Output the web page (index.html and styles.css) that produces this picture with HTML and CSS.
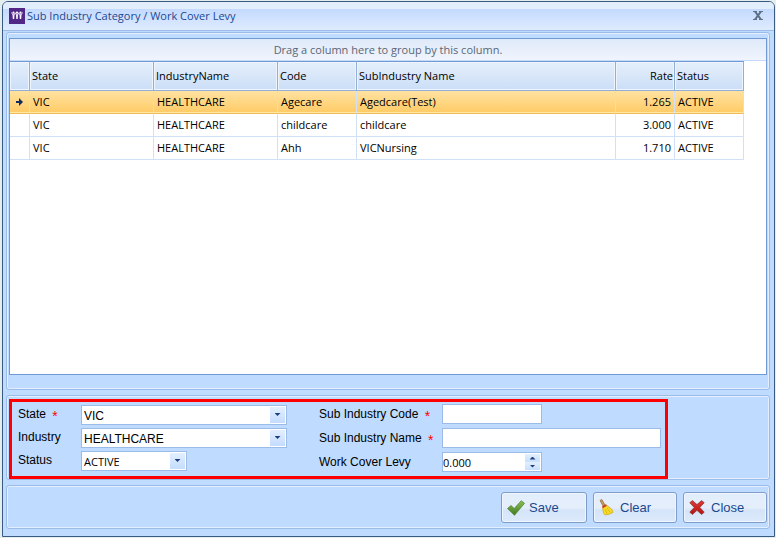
FILE: index.html
```html
<!DOCTYPE html>
<html lang="en">
<head>
    <meta charset="UTF-8">
    <meta name="viewport" content="width=device-width, initial-scale=1.0">
    <title>Sub Industry Category / Work Cover Levy</title>
    <link rel="stylesheet" href="styles.css">
</head>
<body>
    <div class="window">
        <!-- Title bar -->
        <header class="title-bar">
            <svg class="app-icon" width="16" height="16" viewBox="0 0 16 16" aria-hidden="true">
                <rect width="16" height="16" fill="#512888"/>
                <g fill="#fff">
                    <circle cx="4.500" cy="4.700" r="1.100"/>
                    <circle cx="8" cy="4.700" r="1.100"/>
                    <circle cx="11.500" cy="4.700" r="1.100"/>
                    <path d="M3.500 6.500h2L5.200 11H3.800zM7 6.500h2L8.700 11H7.300zM10.500 6.500h2L12.200 11h-1.400z"/>
                </g>
                <path d="M2.500 4.500 4 7h1L6.300 4.800 7.500 7h1L9.700 4.800 11 7h1l1.500-2.500" fill="none" stroke="#e6dcf3"/>
            </svg>
            <h1>Sub Industry Category / Work Cover Levy</h1>
            <button type="button" class="close-x" aria-label="Close window">
                <svg width="10" height="9" viewBox="0 0 10 9">
                    <path d="M2 .5 8 8.500M8 .5 2 8.500" stroke="#5f7084" stroke-width="2"/>
                    <path d="M0 .5h4M6 .5h4M0 8.500h4M6 8.500h4" stroke="#5f7084"/>
                </svg>
            </button>
        </header>

        <!-- Levy list -->
        <section class="panel list-panel">
            <div class="grid">
                <div class="group-bar">Drag a column here to group by this column.</div>
                <table>
                    <colgroup>
                        <col class="col-marker">
                        <col class="col-state">
                        <col class="col-industry">
                        <col class="col-code">
                        <col class="col-name">
                        <col class="col-rate">
                        <col class="col-status">
                    </colgroup>
                    <thead>
                        <tr>
                            <th></th>
                            <th>State</th>
                            <th>IndustryName</th>
                            <th>Code</th>
                            <th>SubIndustry Name</th>
                            <th class="number">Rate</th>
                            <th>Status</th>
                        </tr>
                    </thead>
                    <tbody>
                        <tr class="selected">
                            <td class="marker">
                                <svg width="7" height="8" viewBox="0 0 7 8"><path d="M0 3h3V0l4 4-4 4V5H0z" fill="#0f2c5c"/></svg>
                            </td>
                            <td>VIC</td>
                            <td>HEALTHCARE</td>
                            <td>Agecare</td>
                            <td>Agedcare(Test)</td>
                            <td class="number">1.265</td>
                            <td>ACTIVE</td>
                        </tr>
                        <tr>
                            <td></td>
                            <td>VIC</td>
                            <td>HEALTHCARE</td>
                            <td>childcare</td>
                            <td>childcare</td>
                            <td class="number">3.000</td>
                            <td>ACTIVE</td>
                        </tr>
                        <tr>
                            <td></td>
                            <td>VIC</td>
                            <td>HEALTHCARE</td>
                            <td>Ahh</td>
                            <td>VICNursing</td>
                            <td class="number">1.710</td>
                            <td>ACTIVE</td>
                        </tr>
                    </tbody>
                </table>
            </div>
        </section>

        <!-- Entry form -->
        <form class="panel form-panel" id="levyForm">
            <div class="form-frame">
                <div class="form-column">
                    <div class="field">
                        <label for="state">State <span class="required">*</span></label>
                        <div class="combo wide">
                            <select id="state"><option>VIC</option></select>
                            <span class="drop"></span>
                        </div>
                    </div>
                    <div class="field">
                        <label for="industry">Industry</label>
                        <div class="combo wide">
                            <select id="industry"><option>HEALTHCARE</option></select>
                            <span class="drop"></span>
                        </div>
                    </div>
                    <div class="field">
                        <label for="status">Status</label>
                        <div class="combo small">
                            <select id="status"><option>ACTIVE</option></select>
                            <span class="drop"></span>
                        </div>
                    </div>
                </div>
                <div class="form-column second">
                    <div class="field">
                        <label for="subCode">Sub Industry Code <span class="required">*</span></label>
                        <input type="text" id="subCode" class="short">
                    </div>
                    <div class="field">
                        <label for="subName">Sub Industry Name <span class="required">*</span></label>
                        <input type="text" id="subName" class="long">
                    </div>
                    <div class="field">
                        <label for="levy">Work Cover Levy</label>
                        <div class="spinner short">
                            <input type="text" id="levy" inputmode="decimal" value="0.000">
                            <div class="spin-buttons">
                                <button type="button" class="up" aria-label="Increase"></button>
                                <button type="button" class="down" aria-label="Decrease"></button>
                            </div>
                        </div>
                    </div>
                </div>
            </div>
        </form>

        <!-- Actions -->
        <footer class="panel actions">
            <button type="submit" form="levyForm" class="btn save">
                <svg width="18" height="16" viewBox="0 0 18 16">
                    <defs>
                        <linearGradient id="tick" x1="0" y1="0" x2="0" y2="1">
                            <stop offset="0" stop-color="#8cc152"/>
                            <stop offset="1" stop-color="#3f7a22"/>
                        </linearGradient>
                    </defs>
                    <path d="M.5 8.500 4 5.500l3.200 3L14.300.7l3.200 2.600L7.500 15.300z" fill="url(#tick)" stroke="#5b8540" stroke-width=".8"/>
                </svg>
                Save
            </button>
            <button type="reset" form="levyForm" class="btn">
                <svg width="15" height="17" viewBox="0 0 15 17">
                    <path d="M1 1.500 2.800.5 6 6 4 7z" fill="#c99a5e" stroke="#94683c" stroke-width=".7"/>
                    <path d="M3.500 8.500 7.500 6 13 10.500l1 3-4 1.700-4 .8-1.500-2z" fill="#f7dc25" stroke="#cfa51a" stroke-width=".7"/>
                    <path d="M3 7.500 6.800 5.200 7.800 7 3.800 9.300z" fill="#c9402a"/>
                    <path d="M6 10l2 4.500M8 9l3.300 4.500" stroke="#d3a616" stroke-width=".7"/>
                </svg>
                Clear
            </button>
            <button type="button" class="btn">
                <svg width="16" height="15" viewBox="0 0 16 15">
                    <defs>
                        <linearGradient id="cross" x1="0" y1="0" x2="0" y2="1">
                            <stop offset="0" stop-color="#e03a35"/>
                            <stop offset="1" stop-color="#b51212"/>
                        </linearGradient>
                    </defs>
                    <path d="M.8 2.700 3.500.6 8 4.600 12.500.6l2.700 2.100L10.800 7.400l4.400 4.800-2.700 2.200L8 10.300l-4.500 4.100-2.700-2.200 4.400-4.800z" fill="url(#cross)" stroke="#8d3a3a" stroke-width=".8"/>
                </svg>
                Close
            </button>
        </footer>
    </div>
</body>
</html>
```
FILE: styles.css
```css
:root {
    --panel-bg: #bfdbff;
    --line: #9bbce8;
    --grid-line: #cfe0f7;
    --strong-line: #6f9ad3;
    --title-text: #1c4891;
    --ui-font: "Open Sans", "Noto Sans", sans-serif;
    --form-font: "Liberation Sans", Arial, sans-serif;
}

* {
    margin: 0;
    padding: 0;
    box-sizing: border-box;
}

body {
    display: flex;
    min-height: 100vh;
    padding: 1px 1px 1px 2px;
    background: #e5eeee;
    font-family: var(--ui-font);
    font-size: 11px;
    color: #000;
}

.window {
    display: flex;
    flex: 1;
    flex-direction: column;
    gap: 5px;
    min-width: 0;
    padding: 0 4px 7px 3px;
    background: var(--panel-bg);
    border: 1px solid #3b5a82;
    border-radius: 6px 6px 0 0;
}

.title-bar {
    display: flex;
    align-items: center;
    gap: 2px;
    height: 29px;
    margin: 0 -4px -4px -3px;
    padding: 0 11px 1px 6px;
    background: linear-gradient(#e3eefc 0, #e3eefc 7px, #c3daff 7px, #dfebff 100%);
    border-bottom: 1px solid var(--line);
    border-radius: 5px 5px 0 0;
}

.title-bar h1 {
    flex: 1;
    font-size: 11px;
    font-weight: normal;
    line-height: 16px;
    color: var(--title-text);
}

.close-x {
    display: flex;
    background: none;
    border: none;
}

.panel {
    border: 1px solid var(--line);
    border-radius: 3px;
    box-shadow: inset 0 0 0 1px #e3efff;
}

/* List */
.list-panel {
    display: flex;
    flex: 1;
    padding: 5px 2px 14px;
}

.grid {
    flex: 1;
    min-width: 0;
    background: #fff;
    border: 1px solid var(--strong-line);
}

.group-bar {
    height: 22px;
    line-height: 22px;
    text-align: center;
    color: #5a6675;
    background: linear-gradient(#dfeaf9, #f0f4fd);
    border-bottom: 1px solid #c5dafa;
}

table {
    table-layout: fixed;
    width: 734px;
    border-collapse: separate;
    border-spacing: 0;
}

.col-marker { width: 20px; }
.col-state { width: 124px; }
.col-industry { width: 124px; }
.col-code { width: 79px; }
.col-name { width: 259px; }
.col-rate { width: 59px; }
.col-status { width: 69px; }

th {
    height: 30px;
    padding: 0 2px 2px;
    font-weight: normal;
    text-align: left;
    background: linear-gradient(#e5effb, #cbdef7);
    border-top: 1px solid var(--strong-line);
    border-right: 1px solid #92aed2;
    border-bottom: 1px solid #92aed2;
    box-shadow: inset 0 0 0 1px #eef5fe;
}

td {
    height: 23px;
    padding: 0 3px;
    line-height: 16px;
    border-right: 1px solid var(--grid-line);
    border-bottom: 1px solid var(--grid-line);
}

.number {
    text-align: right;
}

th.number {
    padding-right: 1px;
}

.selected td {
    background: linear-gradient(#ffe2a0, #ffcb66);
    border-bottom-color: #f0b95c;
    box-shadow: inset 0 -1px #ffe9a0;
}

.marker svg {
    display: block;
    margin: 0 auto;
}

/* Form */
.form-panel {
    display: flex;
    padding: 3px 2px 0;
    font-family: var(--form-font);
    font-size: 12px;
}

.form-frame {
    display: flex;
    gap: 32px;
    padding: 1px 4px 4px 6px;
    border: 3px solid #f00;
}

.form-column {
    display: grid;
    gap: 3px;
    align-content: start;
    padding-top: 2px;
}

.form-column.second {
    gap: 4px;
    padding-top: 1px;
}

.field {
    display: flex;
    height: 20px;
}

.field label {
    width: 63px;
    line-height: 18px;
}

.second label {
    width: 123px;
    line-height: 20px;
}

.required {
    margin-left: 3px;
    font-size: 14px;
    line-height: 16px;
    vertical-align: -3px;
    color: #f00;
}

.combo {
    position: relative;
    display: flex;
}

.wide { width: 206px; }
.small { width: 106px; }
.short { width: 100px; }
.long { width: 219px; }

select,
input {
    height: 20px;
    font-family: var(--form-font);
    font-size: 12px;
    color: #000;
    background: #fff;
    border: 1px solid var(--line);
    border-radius: 0;
    outline: none;
}

select {
    width: 100%;
    padding: 2px 18px 0 2px;
    appearance: none;
}

#status,
#levy {
    padding-top: 0;
    font-family: var(--ui-font);
    font-size: 11px;
}

.drop {
    position: absolute;
    top: 2px;
    right: 2px;
    bottom: 2px;
    width: 15px;
    background: linear-gradient(#e3efff, #c4dcff);
    pointer-events: none;
}

/* small triangles of the combos and the spinner */
.drop::after,
.up::after,
.down::after {
    content: "";
    display: block;
    width: 6px;
    height: 3px;
    margin: auto;
    background: #1c3f80;
    clip-path: polygon(0 0, 100% 0, 50% 100%);
}

.drop::after {
    margin-top: 6px;
}

.up::after {
    clip-path: polygon(50% 0, 100% 100%, 0 100%);
}

.spinner {
    display: flex;
    height: 20px;
    padding: 1px 1px 1px 0;
    background: #fff;
    border: 1px solid var(--line);
}

.spinner input {
    flex: 1;
    min-width: 0;
    height: 16px;
    border: none;
}

.spin-buttons {
    display: grid;
    width: 15px;
}

.spin-buttons button {
    background: linear-gradient(#e3efff, #c9dfff);
    border: none;
}

/* Actions */
.actions {
    display: flex;
    justify-content: flex-end;
    gap: 6px;
    padding: 6px 2px 5px;
}

.btn {
    display: flex;
    align-items: center;
    gap: 6px;
    width: 84px;
    height: 31px;
    padding: 0 5px;
    font-family: var(--form-font);
    font-size: 13px;
    color: var(--title-text);
    background: linear-gradient(#e2edfb 0, #e5effc 50%, #d5e4f8 60%, #dceafb 100%);
    border: 1px solid #7f9dc9;
    border-radius: 3px;
    box-shadow: inset 0 0 0 1px #eff6ff;
}

.btn.save {
    gap: 4px;
    width: 86px;
}
```
